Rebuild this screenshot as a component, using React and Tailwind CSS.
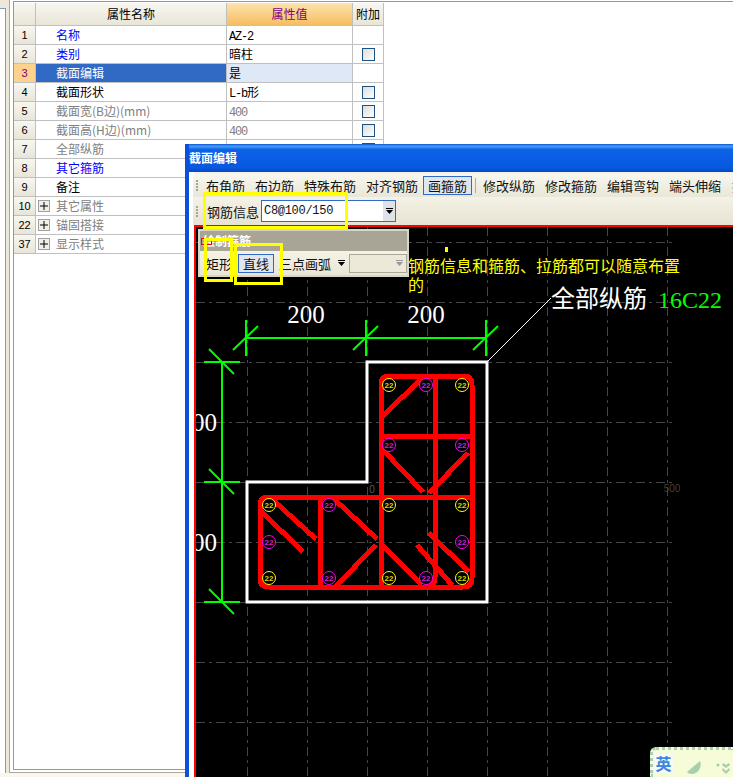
import React from "react";

const rows = [
  { n: "1", name: "名称", c: "text-[#0000ff]", v: "AZ-2", mono: true },
  { n: "2", name: "类别", c: "text-[#0000ff]", v: "暗柱", check: true },
  { n: "3", name: "截面编辑", sel: true, v: "是" },
  { n: "4", name: "截面形状", c: "text-black", v: "L-b", suffix: "形", mono: true, check: true },
  { n: "5", name: "截面宽(B边)(mm)", c: "text-[#808080]", v: "400", mono: true, gray: true, check: true },
  { n: "6", name: "截面高(H边)(mm)", c: "text-[#808080]", v: "400", mono: true, gray: true, check: true },
  { n: "7", name: "全部纵筋", c: "text-[#808080]", check: true },
  { n: "8", name: "其它箍筋", c: "text-[#0000ff]", check: true },
  { n: "9", name: "备注", c: "text-black", check: true },
  { n: "10", name: "其它属性", c: "text-[#808080]", plus: true },
  { n: "22", name: "锚固搭接", c: "text-[#808080]", plus: true },
  { n: "37", name: "显示样式", c: "text-[#808080]", plus: true },
];

const tools1 = ["布角筋", "布边筋", "特殊布筋", "对齐钢筋"];
const tools2 = ["修改纵筋", "修改箍筋", "编辑弯钩", "端头伸缩", "批量"];

const gridX = [247, 307, 367, 427, 487, 547, 607, 667];
const gridY = [242, 302, 362, 422, 482, 542, 602, 662, 722];

const bars = [
  [389, 385, "y"], [426, 385, "m"], [462, 385, "y"],
  [389, 445, "m"], [462, 445, "m"],
  [269, 505, "y"], [329, 505, "m"], [389, 505, "y"], [462, 505, "y"],
  [269, 542, "m"], [462, 542, "m"],
  [269, 578, "y"], [329, 578, "m"], [389, 578, "y"], [426, 578, "m"], [462, 578, "y"],
];

const redLines = [
  [382, 417, 422, 378],
  [383, 450, 423, 492],
  [468, 453, 429, 493],
  [273, 500, 316, 539],
  [262, 512, 303, 552],
  [333, 498, 377, 539],
  [335, 587, 376, 545],
  [382, 545, 422, 585],
  [417, 545, 452, 585],
  [429, 533, 469, 572],
  [381, 436, 472, 436],
  [381, 497, 381, 587],
  [320, 497, 320, 587],
];

const greenLines = [
  [246, 338, 486, 338],
  [246, 320, 246, 356],
  [366, 320, 366, 356],
  [486, 320, 486, 356],
  [233, 350, 258, 326],
  [353, 350, 378, 326],
  [473, 350, 498, 326],
  [222, 362, 222, 602],
  [204, 362, 240, 362],
  [204, 482, 240, 482],
  [204, 602, 240, 602],
  [209, 349, 234, 374],
  [209, 469, 234, 494],
  [209, 589, 234, 614],
];

function Arrow({ className }) {
  return (
    <svg width="7" height="6" viewBox="0 0 7 6" className={className}>
      <rect x="0" y="0" width="7" height="1" fill="currentColor" />
      <polygon points="0,2 7,2 3.5,6" fill="currentColor" />
    </svg>
  );
}

function Grip() {
  return (
    <div className="flex flex-col gap-[1px] w-[3px] shrink-0">
      {[0, 1, 2, 3].map((i) => (
        <div key={i} className="w-[2px] h-[2px] bg-[#a8a594]" />
      ))}
    </div>
  );
}

function Row({ r }) {
  return (
    <div className="flex h-[19px] border-b border-[#c0c0c0] text-[12px] leading-[18px]">
      <div
        className={
          "w-[22px] shrink-0 border-r border-[#c0c0c0] text-center text-[11px] [font-family:'Liberation_Sans',sans-serif] " +
          (r.sel
            ? "bg-[#fdd28c] text-[#800080]"
            : "bg-gradient-to-b from-[#f8f7f0] to-[#e8e5d8] text-black")
        }
      >
        {r.n}
      </div>
      <div
        className={
          "w-[191px] shrink-0 border-r border-[#c0c0c0] flex items-center " +
          (r.sel ? "bg-[#316ac5] text-white" : "bg-white " + r.c) +
          (r.plus ? " pl-[2px]" : " pl-[20px]")
        }
      >
        {r.plus && (
          <span className="w-[12px] h-[12px] mr-[6px] border border-[#a0a0a0] bg-[#f0efe8] flex items-center justify-center text-black">
            <svg width="8" height="8" viewBox="0 0 8 8">
              <path d="M0 4h8M4 0v8" stroke="currentColor" strokeWidth="1" />
            </svg>
          </span>
        )}
        {r.name}
      </div>
      <div
        className={
          "w-[126px] shrink-0 border-r border-[#c0c0c0] pl-[2px] " +
          (r.sel ? "bg-[#dfe8f6] " : "bg-white ") +
          (r.gray ? "text-[#808080]" : "text-black")
        }
      >
        {r.mono ? (
          <span className="[font-family:'Liberation_Mono',monospace] text-[12px] tracking-[-1.2px]">{r.v}</span>
        ) : (
          r.v
        )}
        {r.suffix}
      </div>
      <div className="w-[31px] shrink-0 border-r border-[#c0c0c0] flex items-center justify-center bg-white">
        {r.check && (
          <div className="w-[13px] h-[13px] border border-[#1c5180] bg-gradient-to-br from-[#dcdcd7] to-white" />
        )}
      </div>
    </div>
  );
}

function Drawing() {
  return (
    <svg width="537" height="550" viewBox="196 227 537 550" className="block">
      {gridX.map((x) => (
        <line key={x} x1={x} y1="227" x2={x} y2="777" stroke="#464646" strokeWidth="1" strokeDasharray="9 4 3 4" shapeRendering="crispEdges" />
      ))}
      {gridY.map((y) => (
        <line key={y} x1="196" y1={y} x2="676" y2={y} stroke="#464646" strokeWidth="1" strokeDasharray="9 4 3 4" shapeRendering="crispEdges" />
      ))}
      <text x="372" y="493" textAnchor="middle" fontSize="10" className="fill-[#5a5a5a] [font-family:'Liberation_Sans',sans-serif]">0</text>
      <text x="672" y="492" textAnchor="middle" fontSize="10" className="fill-[#4a3f36] [font-family:'Liberation_Sans',sans-serif]">500</text>

      <polygon points="367,362 487,362 487,602 247,602 247,482 367,482" fill="none" stroke="#ffffff" strokeWidth="3" />
      <line x1="487" y1="362" x2="551" y2="298" stroke="#ffffff" strokeWidth="1" />

      {greenLines.map((l, i) => (
        <line key={i} x1={l[0]} y1={l[1]} x2={l[2]} y2={l[3]} stroke="#00ff00" strokeWidth="2" />
      ))}

      <g stroke="#ff0000" strokeWidth="5" fill="none" shapeRendering="crispEdges">
        <path d="M381 497V385Q381 376 390 376H463Q472 376 472 385V578Q472 587 463 587H269Q260 587 260 578V506Q260 497 269 497H472" />
        <path d="M435 376V577Q435 587 425 587" />
        {redLines.map((l, i) => (
          <line key={i} x1={l[0]} y1={l[1]} x2={l[2]} y2={l[3]} />
        ))}
      </g>

      {bars.map(([x, y, k], i) => (
        <g key={i}>
          <circle cx={x} cy={y} r="6.5" fill="#000000" stroke={k === "y" ? "#ffff00" : "#ff00ff"} strokeWidth="1" />
          <text
            x={x}
            y={y + 3}
            textAnchor="middle"
            fontSize="8"
            fontWeight="700"
            className={(k === "y" ? "fill-[#d8d800]" : "fill-[#d020d0]") + " [font-family:'Liberation_Sans',sans-serif]"}
          >
            22
          </text>
        </g>
      ))}

      <text x="306" y="323" textAnchor="middle" fontSize="25" className="fill-white [font-family:'Liberation_Serif',serif]">200</text>
      <text x="426" y="323" textAnchor="middle" fontSize="25" className="fill-white [font-family:'Liberation_Serif',serif]">200</text>
      <text x="217" y="431" textAnchor="end" fontSize="25" className="fill-white [font-family:'Liberation_Serif',serif]">200</text>
      <text x="217" y="551" textAnchor="end" fontSize="25" className="fill-white [font-family:'Liberation_Serif',serif]">200</text>

      <text x="551" y="307" fontSize="24" className="fill-white">全部纵筋</text>
      <text x="658" y="308" fontSize="24" className="fill-[#00ff00] [font-family:'Liberation_Serif',serif]">16C22</text>

      <rect x="445" y="247" width="3" height="5" fill="#ffff00" />
    </svg>
  );
}

export default function App() {
  return (
    <div className="relative w-[733px] h-[777px] overflow-hidden bg-[#faf8ee] text-black [font-family:'Noto_Sans_CJK_SC','Liberation_Sans',sans-serif]">
      <div className="flex h-[773px] bg-[#ece9d8]">
        <div className="w-[6px] shrink-0 mt-2 bg-white border-t border-r border-[#7f9db9]" />
        <div className="w-[3px] shrink-0" />
        <div className="flex-1 min-w-0 flex border-l border-b border-[#aca899] bg-white pl-[3px] pt-[1px] pb-[2px]">
          <div className="flex-1 min-w-0 border-l border-t border-b border-[#7f9db9] bg-white pt-px">
            <div className="flex h-[23px] border-b border-[#c0c0c0] text-[12px] leading-[22px] w-[370px]">
              <div className="w-[22px] shrink-0 border-r border-[#c0c0c0] bg-gradient-to-b from-[#f8f7f0] to-[#e8e5d8]" />
              <div className="w-[191px] shrink-0 border-r border-[#c0c0c0] text-center bg-gradient-to-b from-[#f8f7f0] to-[#e8e5d8]">属性名称</div>
              <div className="w-[126px] shrink-0 border-r border-[#c0c0c0] text-center text-[#800080] bg-gradient-to-b from-[#fde3ac] to-[#f6bd60]">属性值</div>
              <div className="w-[31px] shrink-0 border-r border-[#c0c0c0] text-center bg-gradient-to-b from-[#f8f7f0] to-[#e8e5d8]">附加</div>
            </div>
            <div className="w-[370px]">
              {rows.map((r) => (
                <Row key={r.n} r={r} />
              ))}
            </div>
          </div>
        </div>
      </div>

      {/* 截面编辑 window */}
      <div className="absolute left-[185px] top-[144px] w-[548px] h-[633px] flex flex-col border-l-4 border-[#0a50dd] overflow-hidden">
        <div className="h-[28px] -ml-1 pl-[4px] shrink-0 bg-[linear-gradient(#0a58d8_0%,#4a9cf5_8%,#0c62e8_20%,#0858e0_85%,#0548c0_100%)] text-white text-[12px] font-bold leading-[28px]">
          截面编辑
        </div>
        <div className="flex-1 min-h-0 flex flex-col bg-white pl-[5px]">
          <div className="h-[2px] shrink-0 bg-[#f4f2e6]" />
          <div className="h-[23px] shrink-0 -ml-px flex items-center pl-[3px] rounded-tl-[3px] bg-gradient-to-b from-[#f8f7ef] to-[#e9e7d8] text-[13px] leading-none text-[#111] overflow-hidden">
            <Grip />
            <div className="flex shrink-0 items-center gap-[10px] ml-[7px] whitespace-nowrap">
              {tools1.map((t) => (
                <span key={t}>{t}</span>
              ))}
            </div>
            <span className="ml-[5px] w-[49px] h-[19px] shrink-0 border border-[#316ac5] bg-[#e1e6ee] flex items-center justify-center whitespace-nowrap">画箍筋</span>
            <span className="ml-[3px] mr-[7px] w-px h-[15px] shrink-0 bg-[#b0ad9c]" />
            <div className="flex shrink-0 items-center gap-[10px] whitespace-nowrap">
              {tools2.map((t) => (
                <span key={t} className={t === "批量" ? "text-[#aaa]" : ""}>{t}</span>
              ))}
            </div>
          </div>
          <div className="h-[28px] shrink-0 -ml-px flex items-center pl-[3px] bg-gradient-to-b from-[#f4f2e6] to-[#e6e3d3] text-[13px] leading-none text-[#111]">
            <Grip />
            <span className="ml-[8px] whitespace-nowrap">钢筋信息</span>
            <div className="ml-[2px] w-[135px] h-[22px] border border-[#316ac5] bg-white flex items-center justify-between pl-[2px]">
              <span className="[font-family:'Liberation_Mono',monospace] text-[12px] tracking-[-0.3px]">C8@100/150</span>
              <span className="w-[12px] h-full bg-[#dfe3e8] flex items-center justify-center text-black">
                <Arrow />
              </span>
            </div>
          </div>
          <div className="flex-1 min-h-0 relative border-l-2 border-t-2 border-[#ff0000] bg-black overflow-hidden">
            <Drawing />
            <div className="absolute left-[212px] top-[29px] w-[276px] text-[16px] leading-[19px] text-[#ffff00]">
              钢筋信息和箍筋、拉筋都可以随意布置的
            </div>
            {/* 绘制箍筋 floating panel */}
            <div className="absolute left-[2px] top-[2px] w-[211px] h-[48px] flex flex-col border-2 border-[#d8d5c6] bg-[#ece9d8]">
              <div className="h-[20px] shrink-0 bg-[#a9a596] text-white text-[12px] font-bold leading-[20px] pl-[3px]">绘制箍筋</div>
              <div className="flex-1 flex items-center text-[13px] leading-none text-[#111] bg-gradient-to-b from-[#f4f2e6] to-[#e9e6d6]">
                <span className="ml-[6px] whitespace-nowrap">矩形</span>
                <span className="ml-[6px] w-[36px] h-[19px] border border-[#316ac5] bg-[#e1e6ee] flex items-center justify-center whitespace-nowrap">直线</span>
                <span className="ml-[5px] whitespace-nowrap">三点画弧</span>
                <Arrow className="ml-[7px] text-black" />
                <span className="ml-[4px] w-[58px] h-[19px] border border-[#aca899] bg-[#ece9d8] flex items-center justify-end pr-[3px] text-[#999]">
                  <Arrow />
                </span>
              </div>
            </div>
          </div>
        </div>
      </div>

      {/* annotation boxes */}
      <div className="absolute left-[203px] top-[192px] w-[145px] h-[37px] border-[3px] border-[#ffff00]" />
      <div className="absolute left-[201px] top-[238px] w-[11px] h-[7px] border border-[#ff0000]" />
      <div className="absolute left-[204px] top-[238px] w-[29px] h-[44px] border-[3px] border-[#ffff00]" />
      <div className="absolute left-[234px] top-[243px] w-[49px] h-[42px] border-[3px] border-[#ffff00]" />

      {/* IME bar */}
      <div className="absolute left-[650px] top-[747px] w-[83px] h-[30px] flex items-center rounded-tl-[6px] border-t-[3px] border-l-[3px] border-dotted border-[#a9cfae] bg-[#f6fbd8]">
        <div className="ml-px w-[19px] h-[19px] bg-[#f4fbf6] text-[#3f86d8] text-[16px] font-bold leading-[19px] text-center">英</div>
        <svg width="54" height="24" viewBox="0 0 54 24" className="ml-[6px]">
          <path d="M8 20L21 9C23 14 20 22 13 22C11 22 9 21 8 20Z" fill="#a7cfae" />
          <circle cx="39" cy="13" r="1.5" fill="#a7cfae" />
          <path d="M44 11l3 2 3-2 1 2-4 3-4-3ZM44 16l3 3 3-3 1 2-4 4-4-4Z" fill="#a7cfae" />
        </svg>
      </div>
    </div>
  );
}
